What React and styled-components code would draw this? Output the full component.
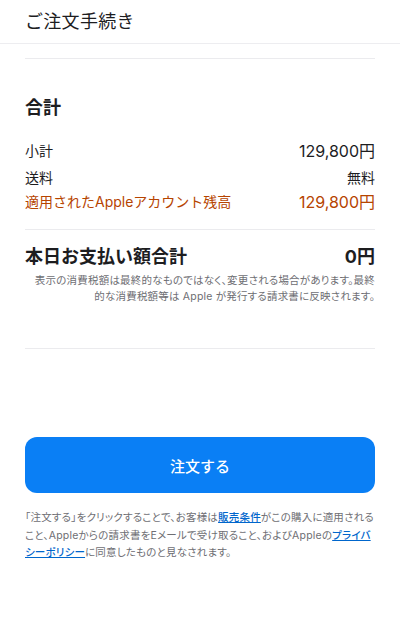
import styled, { createGlobalStyle } from "styled-components";

const Global = createGlobalStyle`
  body {
    margin: 0;
    background: #fff;
    font-family: Inter, "Noto Sans CJK JP", sans-serif;
    color: #1d1d1f;
  }
`;

const Page = styled.div`
  width: 400px;
  height: 637px;
  overflow: hidden;
  background: #fff;
`;

const Header = styled.header`
  height: 44px;
  padding: 0 25px;
  border-bottom: 1px solid #ededf0;
  display: flex;
  align-items: center;
  box-sizing: border-box;
`;

const Title = styled.h1`
  margin: 0;
  font-size: 18px;
  font-weight: 400;
  letter-spacing: 0.3px;
  color: #1d1d1f;
  padding-bottom: 4px;
`;

const Content = styled.main`
  padding: 0 25px;
`;

const Divider = styled.hr`
  border: none;
  border-top: 1px solid #ebebee;
  margin: ${(p) => p.m || "0"};
`;

const Summary = styled.section`
  padding: 36px 0 16px;
`;

const Heading = styled.h2`
  margin: 0 0 14px;
  font-size: 18px;
  font-weight: 700;
  line-height: 26px;
`;

const Row = styled.div`
  display: flex;
  justify-content: space-between;
  align-items: center;
  height: ${(p) => p.h || 26}px;
  font-size: 14px;
  color: ${(p) => (p.accent ? "#b64400" : "#1d1d1f")};
`;

const Amount = styled.span`
  font-size: ${(p) => p.size || 16}px;
`;

const Total = styled.section`
  padding: 14px 0 43px;
`;

const TotalRow = styled.div`
  display: flex;
  justify-content: space-between;
  align-items: center;
  font-size: 18px;
  font-weight: 700;
  line-height: 26px;
`;

const Note = styled.p`
  margin: 3px 0 0;
  font-size: 10.5px;
  line-height: 16px;
  letter-spacing: 0.2px;
  color: #6e6e73;
  text-align: right;
  font-feature-settings: "palt";
`;

const Actions = styled.section`
  padding-top: 88px;
`;

const OrderButton = styled.button`
  width: 100%;
  height: 56px;
  border: none;
  border-radius: 12px;
  background: #0a7ff5;
  color: #fff;
  font-family: inherit;
  font-size: 15px;
  font-weight: 500;
  cursor: pointer;
`;

const Legal = styled.p`
  margin: 16px 0 0;
  font-size: 10.5px;
  line-height: 17.5px;
  letter-spacing: 0.2px;
  color: #6e6e73;
  font-feature-settings: "palt";
`;

const Link = styled.a`
  color: #0066cc;
  font-weight: 500;
  text-decoration: underline;
`;

function App() {
  return (
    <Page>
      <Global />
      <Header>
        <Title>ご注文手続き</Title>
      </Header>
      <Content>
        <Divider m="14px 0 0" />
        <Summary>
          <Heading>合計</Heading>
          <Row h={30}>
            <span>小計</span>
            <Amount size={16}>129,800円</Amount>
          </Row>
          <Row h={24}>
            <span>送料</span>
            <Amount size={14}>無料</Amount>
          </Row>
          <Row h={24} accent>
            <span>適用されたAppleアカウント残高</span>
            <Amount size={16}>129,800円</Amount>
          </Row>
        </Summary>
        <Divider />
        <Total>
          <TotalRow>
            <span>本日お支払い額合計</span>
            <span>0円</span>
          </TotalRow>
          <Note>
            表示の消費税額は最終的なものではなく、変更される場合があります。最終的な消費税額等は Apple が発行する請求書に反映されます。
          </Note>
        </Total>
        <Divider />
        <Actions>
          <OrderButton>注文する</OrderButton>
          <Legal>
            「注文する」をクリックすることで、お客様は<Link href="#">販売条件</Link>がこの購入に適用されること、Appleからの請求書をEメールで受け取ること、およびAppleの<Link href="#">プライバシーポリシー</Link>に同意したものと見なされます。
          </Legal>
        </Actions>
      </Content>
    </Page>
  );
}

export default App;
